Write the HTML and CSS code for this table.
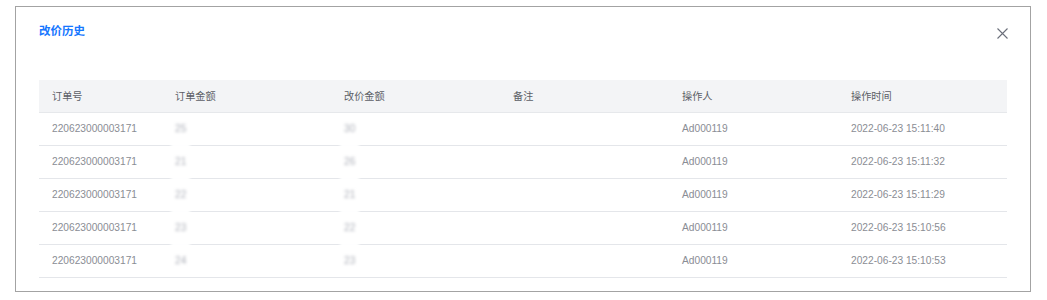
FILE: index.html
```html
<!DOCTYPE html>
<html lang="zh-CN">
<head>
<meta charset="utf-8">
<title>改价历史</title>
<link rel="stylesheet" href="styles.css">
</head>
<body>
<div class="dialog">
  <div class="dialog-head">
    <div class="dialog-title">改价历史</div>
    <button class="dialog-close" aria-label="关闭">
      <svg width="11" height="11" viewBox="0 0 11 11"><path d="M0.5 0.5 L10.5 10.5 M10.5 0.5 L0.5 10.5" stroke="#6b6f7a" stroke-width="1.1" fill="none"/></svg>
    </button>
  </div>
  <table class="history">
    <colgroup>
      <col class="c1"><col class="cn"><col class="cn"><col class="cn"><col class="cn"><col class="cn">
    </colgroup>
    <thead>
      <tr><th>订单号</th><th>订单金额</th><th>改价金额</th><th>备注</th><th>操作人</th><th>操作时间</th></tr>
    </thead>
    <tbody>
      <tr><td>220623000003171</td><td><span class="blur cover">25</span></td><td><span class="blur cover">30</span></td><td></td><td>Ad000119</td><td>2022-06-23 15:11:40</td></tr>
      <tr><td>220623000003171</td><td><span class="blur cover">21</span></td><td><span class="blur cover">26</span></td><td></td><td>Ad000119</td><td>2022-06-23 15:11:32</td></tr>
      <tr><td>220623000003171</td><td><span class="blur cover">22</span></td><td><span class="blur cover">21</span></td><td></td><td>Ad000119</td><td>2022-06-23 15:11:29</td></tr>
      <tr><td>220623000003171</td><td><span class="blur cover">23</span></td><td><span class="blur cover">22</span></td><td></td><td>Ad000119</td><td>2022-06-23 15:10:56</td></tr>
      <tr><td>220623000003171</td><td><span class="blur">24</span></td><td><span class="blur">23</span></td><td></td><td>Ad000119</td><td>2022-06-23 15:10:53</td></tr>
    </tbody>
  </table>
</div>
</body>
</html>
```
FILE: styles.css
```css
html, body {
  margin: 0;
  padding: 0;
  background: #ffffff;
}
body {
  font-family: "Liberation Sans", "Noto Sans CJK SC", sans-serif;
}
.dialog {
  box-sizing: border-box;
  width: 1016px;
  height: 286px;
  margin: 6px 0 0 15px;
  border: 1px solid #a3a3a3;
  background: #fff;
  padding: 15px 22px 0 23px;
}
.dialog-head {
  display: flex;
  justify-content: space-between;
  align-items: flex-start;
  height: 58px;
}
.dialog-title {
  font-family: "Noto Sans CJK SC", sans-serif;
  font-size: 11.5px;
  line-height: 16px;
  font-weight: 700;
  color: #1677ff;
}
.dialog-close {
  border: 0;
  background: transparent;
  padding: 0;
  margin: 6px 0 0 0;
  width: 11px;
  height: 11px;
  display: flex;
  cursor: pointer;
}
.history {
  width: 968px;
  border-collapse: collapse;
  table-layout: fixed;
  font-size: 10.2px;
}
.history col.c1 { width: 123px; }
.history col.cn { width: 169px; }
.history th {
  height: 32px;
  padding: 0 0 0 13px;
  text-align: left;
  font-weight: 400;
  color: #5c5f66;
  background: #f3f4f6;
  border-bottom: 1px solid #e6e8eb;
  box-sizing: border-box;
}
.history th, .history td {
  font-family: "Liberation Sans", "Noto Sans CJK SC", sans-serif;
}
.history td {
  height: 33px;
  box-sizing: border-box;
  padding: 0 0 0 13px;
  color: #8a8d94;
  border-bottom: 1px solid #e4e6ea;
  white-space: nowrap;
}
.blur {
  display: inline-block;
  color: #aeb1ba;
  filter: blur(1.4px);
  padding: 2px 4px;
  margin: -2px -4px;
  background: #fff;
}
.blur.cover {
  padding-bottom: 14px;
  margin-bottom: -14px;
}
```
